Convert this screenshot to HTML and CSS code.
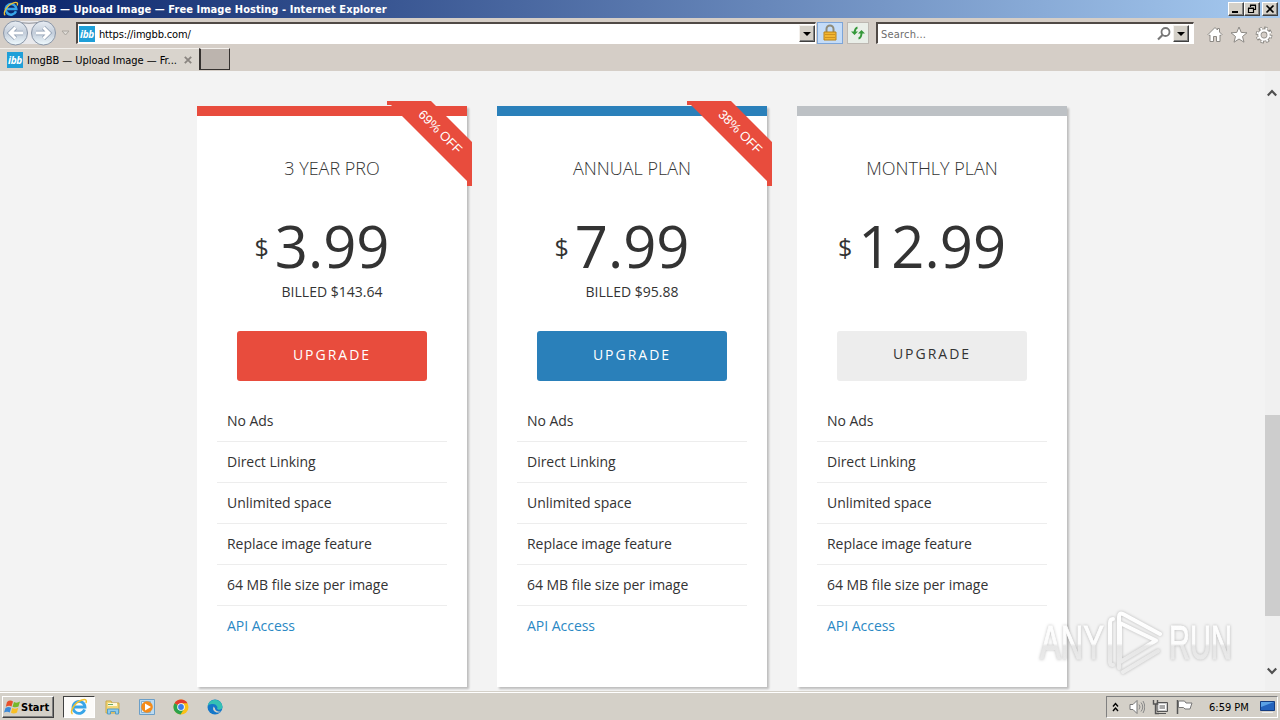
FILE: index.html
```
<!DOCTYPE html>
<html lang="en">
<head>
    <meta charset="UTF-8">
    <meta name="viewport" content="width=device-width, initial-scale=1.0">
    <title>ImgBB — Upload Image — Free Image Hosting</title>
    <link rel="stylesheet" href="styles.css">
</head>
<body>
    <!-- shared icons -->
    <svg class="defs" width="0" height="0">
        <symbol id="ie" viewBox="0 0 18 18">
            <path d="M14.6 11.6A6 6 0 1 1 15 9H4.5" fill="none" stroke="#38a5e8" stroke-width="2.8"/>
            <path d="M2.5 16C-1 14 5 4 12 2c4-1.2 5 .3 4 3" fill="none" stroke="#f2c230" stroke-width="1.5"/>
        </symbol>
        <symbol id="down" viewBox="0 0 8 4"><path d="M0 0h8L4 4z" fill="#000"/></symbol>
    </svg>

    <div class="titlebar">
        <svg class="title-icon"><use href="#ie"/></svg>
        <span class="title-text">ImgBB — Upload Image — Free Image Hosting - Internet Explorer</span>
        <div class="window-buttons">
            <div class="win-button"><svg width="12" height="10"><path d="M2 8h6" stroke="#000" stroke-width="2"/></svg></div>
            <div class="win-button"><svg width="12" height="10"><path d="M4.500 3V1.500h5v4H8M4 1h6M2.500 4.500h5v4h-5zM2 4h6" fill="none" stroke="#000" stroke-width="1.200"/></svg></div>
            <div class="win-button close"><svg width="12" height="10"><path d="M2.5 1.5l7 7M9.500 1.500l-7 7" stroke="#000" stroke-width="1.7"/></svg></div>
        </div>
    </div>

    <div class="navbar">
        <svg class="nav-arrows" width="74" height="28">
            <defs>
                <linearGradient id="glass" x2="0" y2="1">
                    <stop offset="0" stop-color="#e8edf3"/><stop offset=".5" stop-color="#c3cdda"/><stop offset="1" stop-color="#f0fbff"/>
                </linearGradient>
            </defs>
            <path d="M15 2h28v23H15z" fill="#e9e9ec"/>
            <path d="M15 2.500Q29 6 43 2.500" fill="none" stroke="#8d8f96"/>
            <circle cx="15.500" cy="14" r="12" fill="url(#glass)" stroke="#8b97a8"/>
            <circle cx="43.500" cy="14" r="12" fill="url(#glass)" stroke="#8b97a8"/>
            <path d="M23 14H10M15.500 8.500L10 14l5.500 5.500M36 14h13M43.500 8.500L49 14l-5.500 5.500" fill="none" stroke="#8b9bb0" stroke-width="4.400"/>
            <path d="M23 14H10M15.500 8.500L10 14l5.500 5.500M36 14h13M43.500 8.500L49 14l-5.500 5.500" fill="none" stroke="#fff" stroke-width="3"/>
            <path d="M62 12h7l-3.500 4z" fill="#dedbd6" stroke="#aaa69f"/>
        </svg>
        <div class="address field">
            <span class="favicon">ibb</span>
            <span class="url">https://imgbb.com/</span>
            <span class="dropdown"><svg width="8" height="4"><use href="#down"/></svg></span>
        </div>
        <div class="lock">
            <svg width="16" height="18">
                <path d="M4.500 8V5a3.500 3.500 0 0 1 7 0v3" fill="none" stroke="#8f8b78" stroke-width="2"/>
                <path d="M2 8h12v8H2z" fill="#f2b632" stroke="#b98218"/>
                <path d="M3 10.500h10M3 13.500h10" stroke="#cf9220"/>
            </svg>
        </div>
        <div class="refresh">
            <svg width="16" height="16" fill="none" stroke="#35983a" stroke-width="2">
                <path d="M7.500 2.500Q5 3 4.500 8M8.500 13.500q3-.5 3-6"/>
                <path d="M1 6.500h7L4.500 10zM8 8.500h7L11.500 5z" fill="#35983a" stroke="none"/>
            </svg>
        </div>
        <div class="search field">
            <span class="placeholder">Search...</span>
            <svg width="14" height="14"><circle cx="8.500" cy="5" r="4" fill="none" stroke="#777" stroke-width="1.800"/><path d="M5.500 8L1 12.500" stroke="#777" stroke-width="2.200"/></svg>
            <span class="dropdown"><svg width="8" height="4"><use href="#down"/></svg></span>
        </div>
        <div class="tools">
            <svg width="16" height="17"><path d="M1 8.500L8 1.500l2.500 2.500V2.500h2V6L15 8.500l-1 1-1-.5v6.500H9.500v-5h-3v5H3V9l-1 .5z" fill="#fff" stroke="#8c8984"/></svg>
            <svg width="18" height="17"><path d="M9 1l2.200 5.400 5.800.4-4.500 3.700 1.500 5.700-5-3.200-5 3.200 1.500-5.700L1 6.800l5.800-.4z" fill="#fff" stroke="#8c8984"/></svg>
            <!-- gear: toothed ring, then the same ring slimmer in white -->
            <svg width="18" height="18" fill="none">
                <circle cx="9" cy="9" r="6.700" stroke="#8c8984" stroke-width="3.400" stroke-dasharray="3.200 2.062"/>
                <circle cx="9" cy="9" r="4.600" stroke="#8c8984" stroke-width="4"/>
                <circle cx="9" cy="9" r="6.500" stroke="#fff" stroke-width="2.200" stroke-dasharray="1.700 3.405" stroke-dashoffset="-.7"/>
                <circle cx="9" cy="9" r="4.600" stroke="#fff" stroke-width="2.400"/>
            </svg>
        </div>
    </div>

    <div class="tabs">
        <div class="tab">
            <span class="favicon">ibb</span>
            <span class="tab-title">ImgBB — Upload Image — Fr...</span>
            <svg width="8" height="8"><path d="M.8.8l6.400 6.400M7.200.8L.8 7.200" stroke="#8a8580" stroke-width="1.800"/></svg>
        </div>
        <div class="new-tab"></div>
    </div>

    <div class="viewport">
        <div class="plans">
            <div class="plan red">
                <div class="ribbon"><span>69% OFF</span></div>
                <h2>3 YEAR PRO</h2>
                <div class="price"><sup>$</sup>3.99</div>
                <p class="billed">BILLED $143.64</p>
                <a class="upgrade">UPGRADE</a>
                <ul>
                    <li>No Ads</li>
                    <li>Direct Linking</li>
                    <li>Unlimited space</li>
                    <li>Replace image feature</li>
                    <li>64 MB file size per image</li>
                    <li><a>API Access</a></li>
                </ul>
            </div>
            <div class="plan blue">
                <div class="ribbon"><span>38% OFF</span></div>
                <h2>ANNUAL PLAN</h2>
                <div class="price"><sup>$</sup>7.99</div>
                <p class="billed">BILLED $95.88</p>
                <a class="upgrade">UPGRADE</a>
                <ul>
                    <li>No Ads</li>
                    <li>Direct Linking</li>
                    <li>Unlimited space</li>
                    <li>Replace image feature</li>
                    <li>64 MB file size per image</li>
                    <li><a>API Access</a></li>
                </ul>
            </div>
            <div class="plan gray">
                <h2>MONTHLY PLAN</h2>
                <div class="price"><sup>$</sup>12.99</div>
                <p class="billed"></p>
                <a class="upgrade">UPGRADE</a>
                <ul>
                    <li>No Ads</li>
                    <li>Direct Linking</li>
                    <li>Unlimited space</li>
                    <li>Replace image feature</li>
                    <li>64 MB file size per image</li>
                    <li><a>API Access</a></li>
                </ul>
            </div>
        </div>

        <div class="scrollbar">
            <svg width="10" height="8"><path d="M.8 6.500L5 2l4.200 4.500" fill="none" stroke="#505050" stroke-width="2.200"/></svg>
            <div class="thumb"></div>
            <svg width="10" height="8"><path d="M.8 1.500L5 6l4.200-4.500" fill="none" stroke="#505050" stroke-width="2.200"/></svg>
        </div>

        <svg class="watermark" width="244" height="76">
            <defs>
                <linearGradient id="fade" gradientUnits="userSpaceOnUse" x1="0" y1="4" x2="0" y2="64">
                    <stop offset="0" stop-color="#fff"/><stop offset=".56" stop-color="#fcfcfc"/><stop offset=".6" stop-color="#e6e6e6"/><stop offset="1" stop-color="#ececec"/>
                </linearGradient>
            </defs>
            <g class="wm-text" fill="url(#fade)" stroke="url(#fade)">
                <text x="4" y="53" textLength="64" lengthAdjust="spacingAndGlyphs">ANY</text>
                <text x="133" y="53" textLength="63" lengthAdjust="spacingAndGlyphs">RUN</text>
            </g>
            <g class="wm-logo" fill="none" stroke="url(#fade)" stroke-width="4" stroke-linejoin="round" stroke-linecap="round">
                <path d="M77 13q-3 0-3 4v39q0 3 3 3M83 62V11q0-5 4-3l37 20M84 18v38l36-21.500-36-17.500M87 66l35-21"/>
            </g>
        </svg>
    </div>

    <div class="taskbar">
        <div class="start">
            <svg width="17" height="16">
                <path d="M3 3q3-2.500 6-.5L7.500 7.500Q5 6 1.800 7.800z" fill="#e8502a"/>
                <path d="M10 3q3 1.500 6-.5L14.500 7.500Q12 9 8.500 7.700z" fill="#76b82a"/>
                <path d="M1.500 9q3-2 5.600-.3L5.800 13.500Q3 12 0 13.600z" fill="#3d8ad8"/>
                <path d="M8.200 9q3 1.500 6-.3L13 13.500q-3 1.700-6 .3z" fill="#f8bf25"/>
            </svg>
            <span>Start</span>
        </div>
        <div class="task active"><svg width="18" height="18"><use href="#ie"/></svg></div>
        <div class="task">
            <svg width="16" height="16">
                <path d="M1 2h5l1 2h7v10H1z" fill="#f2d675" stroke="#c9a94a"/>
                <path d="M3 4h9v3H3z" fill="#fff8d8"/><path d="M3 5.500h5" stroke="#69a86a"/>
                <path d="M2.500 15v-5h11v5h-3v-2.500h-5V15z" fill="#8ecbee" stroke="#579dc4"/>
            </svg>
        </div>
        <div class="task">
            <svg width="16" height="16">
                <path d="M.5.5h15v15H.5z" fill="#bcdaf0" stroke="#6b9fc8"/><path d="M2.500 2.500h9v11h-9z" fill="#e4f1fa" stroke="#83afd0"/>
                <circle cx="8" cy="8" r="5.800" fill="#f48b19"/><path d="M6 4.500v7L12 8z" fill="#fff"/>
            </svg>
        </div>
        <div class="task">
            <svg width="16" height="16">
                <circle cx="8" cy="8" r="7.500" fill="#fbc116"/>
                <path d="M8 8L1.500 4.200A7.500 7.500 0 0 1 14.500 4.200H8z" fill="#e33b2e"/>
                <path d="M1.500 4.200A7.500 7.500 0 0 0 7.500 15.500L11 10 8 8z" fill="#2ba24c"/>
                <circle cx="8" cy="8" r="3.800" fill="#fff"/><circle cx="8" cy="8" r="2.900" fill="#3d7de8"/>
            </svg>
        </div>
        <div class="task">
            <svg width="16" height="16">
                <circle cx="8" cy="8" r="7.500" fill="#1577c9"/>
                <path d="M.6 7A7.500 7.500 0 0 1 15.500 8q-.5 3-4 2.700-2.200-.4-1-2.400Q9 4.500 5 5 2 5.200.6 7z" fill="#35c1b4"/>
                <path d="M6.500 7.500Q5 12 9.500 13.500q2.500.4 4.200-.8Q8 12.500 7.800 9z" fill="#d4d0c8"/>
            </svg>
        </div>
        <div class="tray">
            <svg class="expand" width="7" height="11"><path d="M1 4.500l2.500-3 2.500 3M1 9l2.500-3L6 9" fill="none" stroke="#000" stroke-width="1.400"/></svg>
            <svg width="16" height="16"><path d="M1 5.500h3l4-4v13l-4-4H1z" fill="#fff" stroke="#777"/><path d="M10 5.500q2 2.500 0 5M12 3.500q3.500 4.500 0 9M14 2q3.500 6 0 12" fill="none" stroke="#888"/></svg>
            <svg width="17" height="16"><path d="M5 3.500h10.500v9H5z" fill="#c8c8c8" stroke="#555"/><path d="M7 5.500h6.500v5H7z" fill="#a9a9a9" stroke="#fff"/><path d="M7 14.500h7" stroke="#555"/><path d="M1.500 1v4h4V1M3.500 5v9.500H7" fill="none" stroke="#555" stroke-width="1.400"/></svg>
            <svg width="17" height="16"><path d="M1.500 1v14" stroke="#555" stroke-width="1.500"/><path d="M2.500 2h6l1.500 2h6l-2 6H9L7.500 8.500h-5z" fill="#fff" stroke="#777"/></svg>
            <span class="clock">6:59 PM</span>
            <svg class="desktop" width="15" height="14"><path d="M.5 1.500h14v9H.5z" fill="#2363bd" stroke="#143c80"/><path d="M1 7L14 2H1z" fill="#5aa1e5"/><path d="M2 12.500h11" stroke="#eee"/></svg>
        </div>
    </div>
</body>
</html>
```
FILE: styles.css
```
* { box-sizing: border-box; }
body { margin: 0; height: 720px; overflow: hidden; display: flex; flex-direction: column; background: #d4d0c8; font-family: "DejaVu Sans Condensed", "DejaVu Sans", sans-serif; font-size: 11px; color: #000; }
svg { display: block; flex: none; }
.defs { position: absolute; }

/* browser window */
.titlebar { height: 18px; flex: none; display: flex; align-items: center; padding: 0 2px 0 3px; background: linear-gradient(to right, #0a246a, #a6caf0); }
.title-icon { width: 16px; height: 16px; }
.title-text { color: #fff; font-weight: bold; margin-left: 1px; white-space: nowrap; letter-spacing: 0.07px; }
.window-buttons { display: flex; margin-left: auto; }
.win-button { width: 16px; height: 14px; background: #d4d0c8; border: 1px solid; border-color: #fff #404040 #404040 #fff; box-shadow: inset -1px -1px #808080; padding: 1px; }
.win-button.close { margin-left: 2px; }
.navbar { height: 30px; flex: none; display: flex; align-items: flex-start; padding-top: 4px; background: #d5cec7; }
.nav-arrows { margin-top: -3px; margin-right: 2px; }
.field { height: 22px; display: flex; align-items: center; background: #fff; border: 1px solid #fff; border-top: 2px solid #504a46; border-left: 2px solid #504a46; }
.address { width: 740px; margin-right: 1px; }
.favicon { width: 16px; height: 16px; background: #1f9fd8; color: #fff; font: italic bold 10px/16px "Open Sans", sans-serif; text-align: center; flex: none; letter-spacing: -0.3px; }
.address .favicon { margin-left: 1px; }
.url { margin: 1px 0 0 4px; letter-spacing: -0.15px; }
.dropdown { width: 16px; height: 17px; margin-left: auto; display: flex; align-items: center; justify-content: center; background: #d4d0c8; border: 1px solid; border-color: #f4f1ed #404040 #404040 #f4f1ed; box-shadow: inset -1px -1px #808080; }
.lock { width: 26px; height: 22px; display: flex; align-items: center; justify-content: center; background: #c4dcf8; border: 1px solid #7da5d8; }
.refresh { width: 22px; height: 22px; margin: 0 7px 0 4px; display: flex; align-items: center; justify-content: center; background: #e9eee8; border: 1px solid #bdb8b2; }
.search { width: 318px; padding-right: 4px; }
.placeholder { color: #6d6d6d; margin: 1px auto 0 3px; letter-spacing: 0.2px; }
.search .dropdown { margin-left: 2px; }
.tools { display: flex; gap: 7px; margin: 4px 0 0 13px; }
.tabs { height: 23px; flex: none; display: flex; background: #d5cec7; }
.tab { width: 199px; display: flex; align-items: center; padding-left: 7px; background: #d9d4cd; border-top: 1px solid #f3f0ec; }
.tab-title { width: 152px; margin: 0 5px 0 4px; white-space: nowrap; letter-spacing: -0.04px; }
.new-tab { width: 31px; height: 22px; background: #bcb4ae; border: 1px solid; border-color: #f4f1ed #35312f #35312f #35312f; border-width: 1px 1px 1px 2px; }

/* page */
.viewport { height: 620px; flex: none; position: relative; display: flex; background: #f3f3f3; }
.plans { flex: 1; display: flex; gap: 30px; padding: 35px 0 0 197px; font-family: "Open Sans", sans-serif; color: #333; }
.plan { position: relative; width: 270px; height: 581px; border-top: 10px solid #bdc1c5; background: #fff; box-shadow: 2px 2px 2px rgba(0, 0, 0, 0.22); }
.plan.red { border-color: #e84c3d; }
.plan.blue { border-color: #2a80ba; }
.plan h2 { margin: 38px 0 0; font-size: 18px; line-height: 28px; font-weight: 300; text-align: center; }
.price { height: 70px; margin: 29px 20px 0 0; display: flex; align-items: center; justify-content: center; font-size: 58px; line-height: 70px; }
.price sup { font-size: 25px; line-height: 30px; margin: 1px 6px 0 0; }
.billed { height: 20px; margin: 1px 0 0; font-size: 14px; line-height: 20px; text-align: center; }
.upgrade { display: block; margin: 29px 40px 0; height: 50px; border-radius: 3px; font-size: 14px; line-height: 48px; text-align: center; letter-spacing: 2px; font-weight: 500; color: #fff; }
.red .upgrade { background: #e84c3d; }
.blue .upgrade { background: #2a80ba; }
.gray .upgrade { background: #ededed; color: #333; font-weight: 400; line-height: 46px; }
.plan ul { list-style: none; margin: 20px 20px 0; padding: 0; }
.plan li { height: 41px; padding-left: 10px; border-bottom: 1px solid #ededed; font-size: 14px; line-height: 40px; letter-spacing: -0.03px; }
.plan li:last-child { border-bottom: none; }
.plan li a { color: #2a88c4; }
.ribbon { position: absolute; top: -15px; right: -5px; width: 85px; height: 85px; background: #e84c3d; clip-path: polygon(0 0, 44px 0, 85px 41px, 85px 85px, 80px 85px, 80px 80px, 4px 4px, 0 4px); }
.ribbon span { position: absolute; left: 13px; top: 21px; width: 80px; line-height: 20px; text-align: center; font-family: "Liberation Sans", sans-serif; font-size: 13px; color: #fff; transform: rotate(45deg); }
.scrollbar { width: 15px; display: flex; flex-direction: column; align-items: center; padding: 18px 0 16px; background: #f0f0f0; }
.scrollbar svg { margin-right: 1px; }
.thumb { width: 15px; height: 201px; margin: 318px 0 auto; background: #cdcdcd; }
.watermark { position: absolute; left: 1036px; top: 535px; }
.wm-text { font-family: "Liberation Sans", sans-serif; font-size: 48px; filter: drop-shadow(0 0 1.5px rgba(0, 0, 0, 0.25)); }
.wm-logo { filter: drop-shadow(0 0 1.5px rgba(0, 0, 0, 0.25)); }

/* taskbar */
.taskbar { height: 29px; flex: none; display: flex; align-items: center; padding: 2px 2px 0; background: #d4d0c8; border-top: 1px solid #d4d0c8; box-shadow: inset 0 1px #fff; }
.start { width: 52px; height: 22px; display: flex; align-items: center; padding-left: 1px; font-weight: bold; border: 1px solid; border-color: #fff #404040 #404040 #fff; box-shadow: inset -1px -1px #808080; margin-right: 9px; }
.start span { font-size: 11px; }
.task { width: 34px; height: 22px; display: flex; align-items: center; justify-content: center; }
.task.active { width: 32px; background: #fcfbf9; border: 1px solid; border-color: #404040 #fff #fff #404040; margin-right: 1px; }
.tray { height: 22px; width: 172px; margin-left: auto; display: flex; align-items: center; gap: 7px; padding-left: 5px; border: 1px solid; border-color: #808080 #fff #fff #808080; }
.expand { margin-right: 3px; }
.clock { margin-left: 9px; white-space: nowrap; }
.desktop { margin-left: 4px; }
```
